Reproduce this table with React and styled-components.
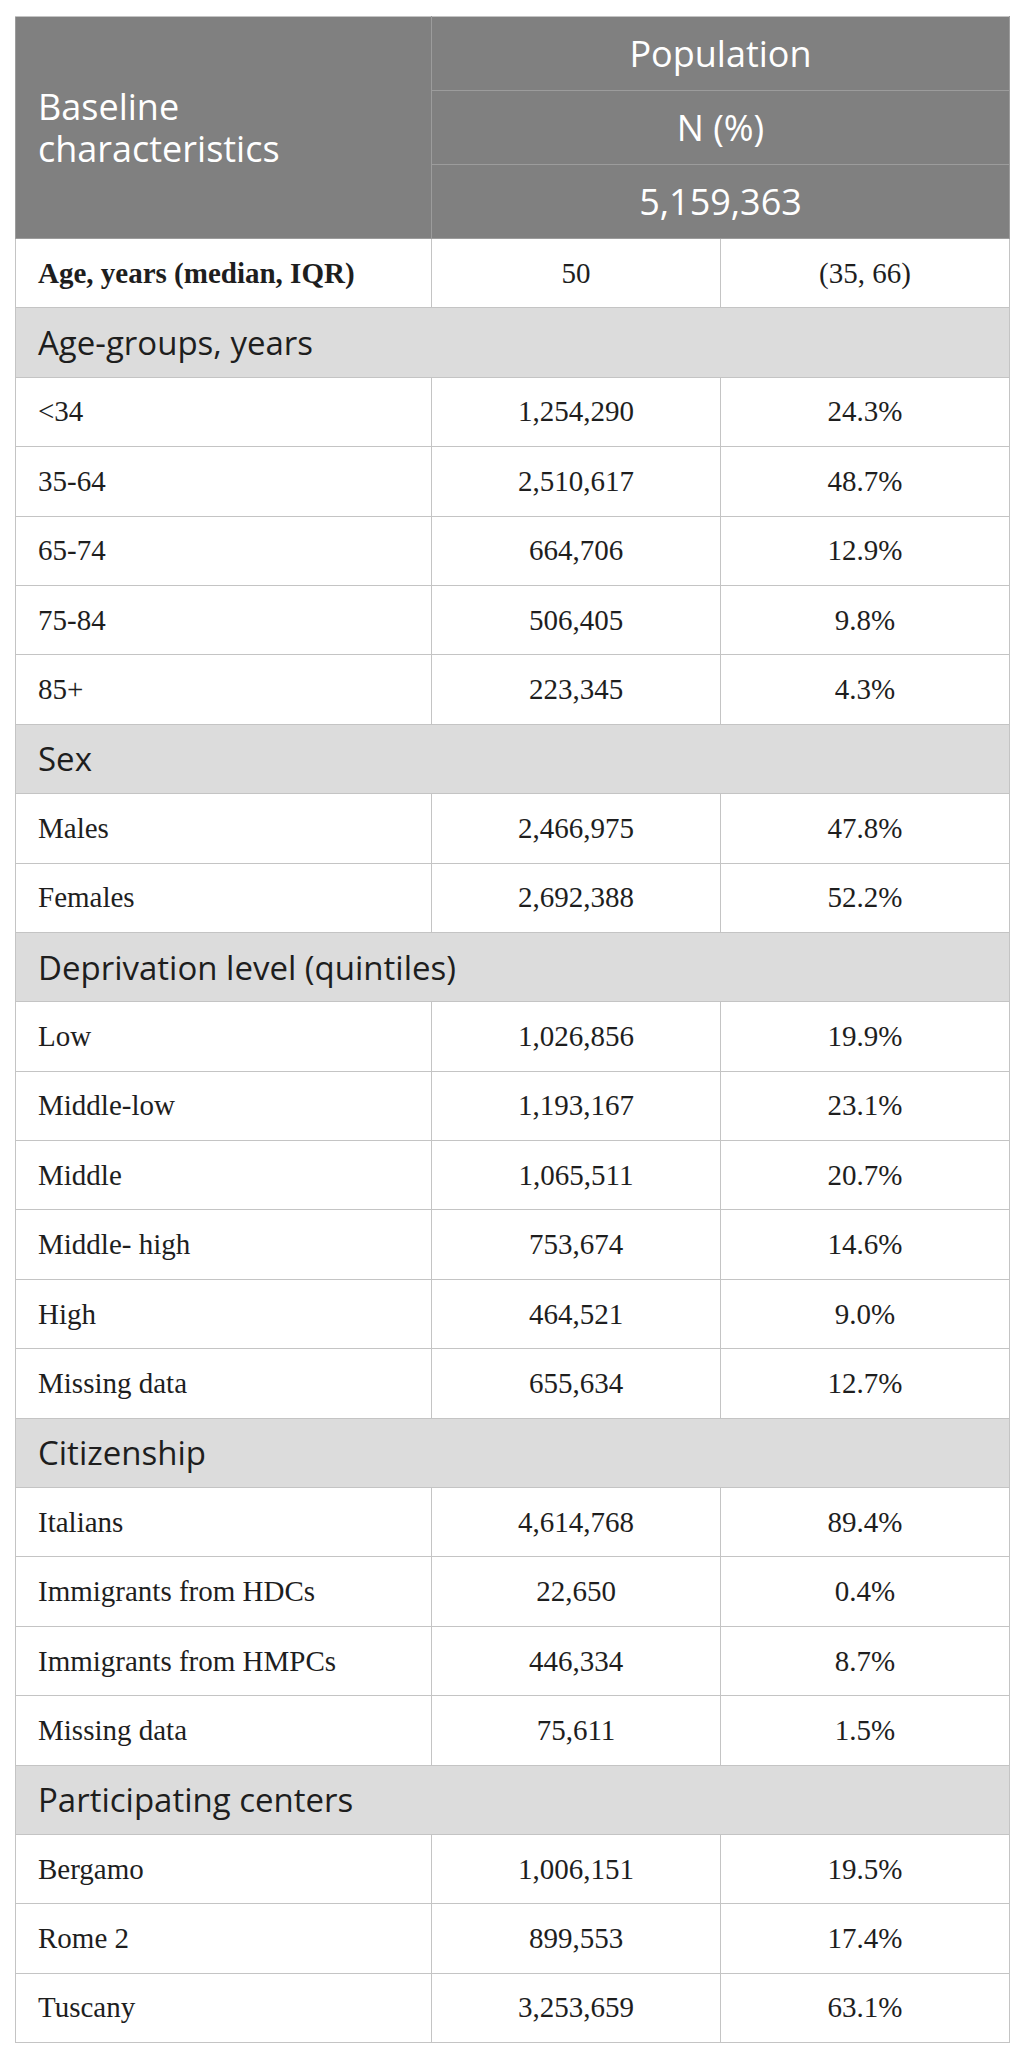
import React from "react";
import styled, { createGlobalStyle } from "styled-components";

const GlobalStyle = createGlobalStyle`
  body {
    margin: 0;
    background: #ffffff;
  }
`;

const Page = styled.main`
  padding: 16px 0 17px 15px;
`;

const Table = styled.table`
  width: 994px;
  table-layout: fixed;
  border-collapse: collapse;
  border: 1px solid #c4c4c4;
  color: #1e1e1e;
`;

const HeadCell = styled.th`
  height: 73px;
  padding: 0 22px;
  background: #808080;
  color: #ffffff;
  font-family: "Open Sans", "Noto Sans", sans-serif;
  font-weight: 400;
  font-size: 36px;
  line-height: 42px;
  text-align: ${(p) => (p.$left ? "left" : "center")};
  vertical-align: middle;
  border: 1px solid #9c9c9c;
  border-top-color: #c4c4c4;
`;

const HeadLine = styled.span`
  display: block;
  line-height: 42px;
`;

const SectionCell = styled.td`
  height: 68.4px;
  padding: 0 22px;
  background: #dcdcdc;
  font-family: "Open Sans", "Noto Sans", sans-serif;
  font-size: 33px;
  color: #1e1e1e;
  border: 1px solid #c4c4c4;
  vertical-align: middle;
`;

const Cell = styled.td`
  height: 68.4px;
  padding: 0 22px;
  font-family: "Liberation Serif", "Times New Roman", serif;
  font-size: 29px;
  font-weight: ${(p) => (p.$bold ? 700 : 400)};
  text-align: ${(p) => (p.$center ? "center" : "left")};
  border: 1px solid #c4c4c4;
  vertical-align: middle;
  white-space: pre;
`;

const sections = [
  {
    title: "Age-groups, years",
    rows: [
      ["<34", "1,254,290", "24.3%"],
      ["35-64", "2,510,617", "48.7%"],
      ["65-74", "664,706", "12.9%"],
      ["75-84", "506,405", "9.8%"],
      ["85+", "223,345", "4.3%"],
    ],
  },
  {
    title: "Sex",
    rows: [
      ["Males", "2,466,975", "47.8%"],
      ["Females", "2,692,388", "52.2%"],
    ],
  },
  {
    title: "Deprivation level (quintiles)",
    rows: [
      ["Low", "1,026,856", "19.9%"],
      ["Middle-low", "1,193,167", "23.1%"],
      ["Middle", "1,065,511", "20.7%"],
      ["Middle- high", "753,674", "14.6%"],
      ["High", "464,521", "9.0%"],
      ["Missing data", "655,634", "12.7%"],
    ],
  },
  {
    title: "Citizenship",
    rows: [
      ["Italians", "4,614,768", "89.4%"],
      ["Immigrants from HDCs", "22,650", "0.4%"],
      ["Immigrants from HMPCs", "446,334", "8.7%"],
      ["Missing data", "75,611", "1.5%"],
    ],
  },
  {
    title: "Participating centers",
    rows: [
      ["Bergamo", "1,006,151", "19.5%"],
      ["Rome 2", "899,553", "17.4%"],
      ["Tuscany", "3,253,659", "63.1%"],
    ],
  },
];

export default function App() {
  return (
    <Page>
      <GlobalStyle />
      <Table>
        <colgroup>
          <col style={{ width: 416 }} />
          <col style={{ width: 289 }} />
          <col style={{ width: 289 }} />
        </colgroup>
        <thead>
          <tr>
            <HeadCell $left rowSpan={3}>
              <HeadLine>Baseline</HeadLine>
              <HeadLine>characteristics</HeadLine>
            </HeadCell>
            <HeadCell colSpan={2}>Population</HeadCell>
          </tr>
          <tr>
            <HeadCell colSpan={2}>N (%)</HeadCell>
          </tr>
          <tr>
            <HeadCell colSpan={2}>5,159,363</HeadCell>
          </tr>
        </thead>
        <tbody>
          <tr>
            <Cell $bold>Age, years (median, IQR)</Cell>
            <Cell $center>50</Cell>
            <Cell $center>(35, 66)</Cell>
          </tr>
          {sections.map((section) => (
            <React.Fragment key={section.title}>
              <tr>
                <SectionCell colSpan={3}>{section.title}</SectionCell>
              </tr>
              {section.rows.map(([label, n, pct], idx) => (
                <tr key={section.title + idx}>
                  <Cell>{label}</Cell>
                  <Cell $center>{n}</Cell>
                  <Cell $center>{pct}</Cell>
                </tr>
              ))}
            </React.Fragment>
          ))}
        </tbody>
      </Table>
    </Page>
  );
}
